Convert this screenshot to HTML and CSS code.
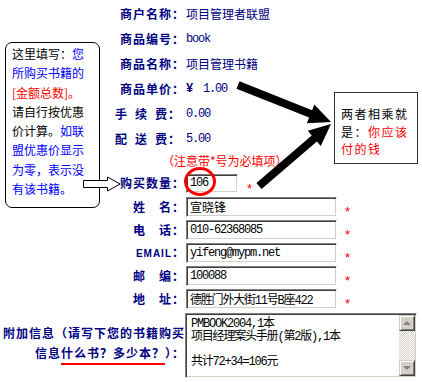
FILE: index.html
```html
<!DOCTYPE html>
<html lang="zh-CN">
<head>
<meta charset="utf-8">
<title>订购信息</title>
<link rel="stylesheet" href="styles.css">
</head>
<body>
<div class="page">
  <form class="form">
    <div class="lab">商户名称：</div><div class="val">项目管理者联盟</div>
    <div class="lab">商品编号：</div><div class="val"><span class="mono">book</span></div>
    <div class="lab">商品名称：</div><div class="val">项目管理书籍</div>
    <div class="lab">商品单价：</div><div class="val"><b class="yen">¥</b><span class="mono">1.00</span></div>
    <div class="lab short">手&ensp;续&ensp;费：</div><div class="val"><span class="mono">0.00</span></div>
    <div class="lab short">配&ensp;送&ensp;费：</div><div class="val"><span class="mono">5.00</span></div>
    <div class="note">（注意带*号为必填项）</div>
    <div class="lab">购买数量：</div><div class="val"><input class="fld qty" value="106"><span class="star star-q">*</span></div>
    <div class="lab">姓　名：</div><div class="val"><input class="fld cjk" value="宣晓锋"><span class="star">*</span></div>
    <div class="lab">电　话：</div><div class="val"><input class="fld" value="010-62368085"><span class="star">*</span></div>
    <div class="lab"><span class="em">EMAIL</span>：</div><div class="val"><input class="fld" value="yifeng@mypm.net"><span class="star">*</span></div>
    <div class="lab">邮　编：</div><div class="val"><input class="fld" value="100088"><span class="star">*</span></div>
    <div class="lab">地　址：</div><div class="val"><input class="fld" value="德胜门外大街11号B座422"><span class="star">*</span></div>
    <div class="lab extra">附加信息（请写下您的书籍购买<br>信息<span class="ul">什么书？多少本？</span>）：</div>
    <div class="ta">
      <textarea class="tx">PMBOOK2004,1本
项目经理案头手册(第2版),1本

共计72+34=106元</textarea>
      <div class="sb">
        <div class="sbtn up"></div>
        <div class="track"></div>
        <div class="sbtn down"></div>
      </div>
    </div>
  </form>

  <div class="tip">这里填写：<span class="b">您</span><br><span class="b">所购买书籍的</span><br><span class="r">[金额总数]。</span><br>请自行按优惠<br>价计算。<span class="b">如联</span><br><span class="b">盟优惠价显示</span><br><span class="b">为零，表示没</span><br><span class="b">有该书籍。</span></div>

  <svg class="hollow" width="38" height="16" viewBox="0 0 38 16">
    <polygon points="0.5,4.5 24.5,4.5 24.5,1 37,8 24.5,15 24.5,11.5 0.5,11.5" fill="#fff" stroke="#000" stroke-width="1"/>
  </svg>

  <div class="calc">两者相乘就<br>是：<span class="r">你应该</span><br><span class="r">付的钱</span></div>

  <svg class="overlay" width="422" height="382" viewBox="0 0 422 382">
    <polygon points="236.5,88.7 309.1,117.6 306.9,123.2 331,122 314.3,104.6 312.1,110.2 239.5,81.3" fill="#000"/>
    <polygon points="261.6,189 316.9,141.4 320.8,146 331,124 307.8,130.8 311.7,135.4 256.4,183" fill="#000"/>
    <ellipse cx="200" cy="181.5" rx="14.5" ry="13" fill="none" stroke="#f00" stroke-width="3"/>
  </svg>
</div>
</body>
</html>
```
FILE: styles.css
```css
* { box-sizing: border-box; }
html, body { margin: 0; padding: 0; background: #fff; }
body {
  width: 422px;
  height: 382px;
  overflow: hidden;
  font: 12px "Noto Sans CJK SC", sans-serif;
  color: #000;
}
.page { position: relative; width: 422px; height: 382px; }

.form {
  display: grid;
  grid-template-columns: 185px 232px;
  column-gap: 1px;
  grid-template-rows: repeat(6, 25px) 20px 24px repeat(5, 23px) 71px;
  padding-top: 1px;
  align-items: center;
  margin: 0;
}
.lab {
  text-align: right;
  font-weight: bold;
  color: #000080;
  letter-spacing: 1px;
  white-space: nowrap;
  line-height: 16px;
}
.lab.short { padding-right: 4px; }
.lab .em { font-family: "Liberation Sans", sans-serif; font-size: 10px; letter-spacing: 1px; }
.lab.extra { align-self: start; padding-top: 13px; line-height: 20px; }
.ul {
  text-decoration: underline;
  text-decoration-color: #f00;
  text-decoration-thickness: 2px;
  text-underline-offset: 5px;
}

.val {
  color: #000080;
  line-height: 16px;
  display: flex;
  align-items: center;
  white-space: nowrap;
}
.mono { font-family: "Liberation Mono", monospace; font-size: 12px; letter-spacing: -1.2px; }
.yen { font-family: "Liberation Mono", monospace; font-size: 12px; width: 17px; }

.note {
  grid-column: 1 / -1;
  padding-left: 162px;
  color: #f00;
  white-space: nowrap;
  line-height: 16px;
}

.fld {
  width: 151px;
  height: 20px;
  margin: 0;
  padding: 0 0 0 3px;
  border: 1px solid;
  border-color: #808080 #fff #fff #808080;
  box-shadow: inset 1px 1px 0 #404040, inset -1px -1px 0 #d4d0c8;
  background: #fff;
  color: #000;
  font: 12px "Liberation Mono", "Noto Sans CJK SC", monospace;
  letter-spacing: -1.2px;
  outline: none;
}
.fld.cjk { letter-spacing: 0; font-family: "Noto Sans CJK SC", sans-serif; }
.fld.qty { width: 52px; height: 19px; }
.star {
  color: #f00;
  font: 13px "Liberation Sans", sans-serif;
  margin-left: 8px;
  line-height: 13px;
  margin-top: 10px;
}
.star-q { margin-left: 9px; }

.ta {
  align-self: start;
  margin-top: 3px;
  margin-left: -1px;
  width: 232px;
  height: 65px;
  display: flex;
  border: 1px solid;
  border-color: #808080 #fff #fff #808080;
  box-shadow: inset 1px 1px 0 #404040, inset -1px -1px 0 #d4d0c8;
  padding: 1px;
  background: #fff;
}
.tx {
  flex: 1;
  min-width: 0;
  border: none;
  margin: 0;
  padding: 3px 0 0 4px;
  resize: none;
  overflow: hidden;
  background: transparent;
  color: #000;
  font: 12px "Liberation Mono", "Noto Sans CJK SC", monospace;
  letter-spacing: -1.2px;
  line-height: 12.5px;
  outline: none;
}
.sb { width: 16px; display: flex; flex-direction: column; }
.sbtn {
  height: 16px;
  background: #d4d0c8;
  border: 1px solid;
  border-color: #d4d0c8 #404040 #404040 #d4d0c8;
  box-shadow: inset 1px 1px 0 #fff, inset -1px -1px 0 #808080;
  display: flex;
  align-items: center;
  justify-content: center;
}
.sbtn::before {
  content: "";
  width: 0;
  height: 0;
  border-left: 4px solid transparent;
  border-right: 4px solid transparent;
}
.up::before { border-bottom: 4px solid #808080; }
.down::before { border-top: 4px solid #808080; }
.track {
  flex: 1;
  background: repeating-conic-gradient(#d4d0c8 0 25%, #fff 0 50%) 0 0 / 2px 2px;
}

.tip {
  position: absolute;
  left: 5px;
  top: 42px;
  width: 95px;
  height: 166px;
  border: 1px solid #000;
  border-radius: 7px;
  padding: 1px 0 0 6px;
  line-height: 19.3px;
  background: #fff;
  white-space: nowrap;
}
.b { color: #00f; }
.r { color: #f00; }

.hollow { position: absolute; left: 83px; top: 176px; }

.calc {
  position: absolute;
  left: 334px;
  top: 92px;
  width: 84px;
  height: 72px;
  border: 1px solid #333;
  padding: 12px 0 0 6px;
  line-height: 17.5px;
  letter-spacing: 1.5px;
  background: #fff;
  white-space: nowrap;
}

.overlay { position: absolute; left: 0; top: 0; pointer-events: none; }
```
